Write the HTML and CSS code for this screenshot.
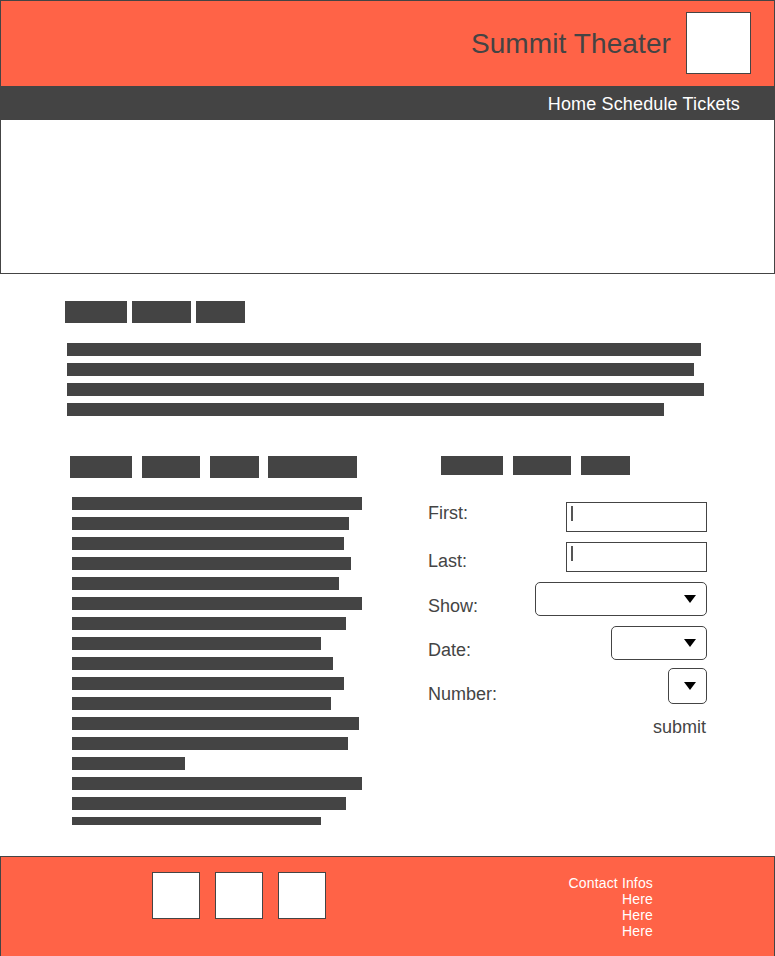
FILE: index.html
```html
<!DOCTYPE html>
<html lang="en">
<head>
<meta charset="utf-8">
<title>Summit Theater</title>
<link rel="stylesheet" href="styles.css">
</head>
<body>
<header class="site-header">
  <div class="brand-bar">
    <h1 class="brand-title">Summit Theater</h1>
    <div class="brand-logo"></div>
  </div>
  <nav class="main-nav">Home Schedule Tickets</nav>
  <div class="hero"></div>
</header>

<main class="content">
  <div class="tabs">
    <span class="tab" style="width:62px"></span>
    <span class="tab" style="width:59px"></span>
    <span class="tab" style="width:49px"></span>
  </div>
  <div class="para">
    <span class="line" style="width:634px"></span>
    <span class="line" style="width:627px"></span>
    <span class="line" style="width:637px"></span>
    <span class="line" style="width:597px"></span>
  </div>

  <div class="columns">
    <section class="col-left">
      <div class="tabs tabs-spaced">
        <span class="tab" style="width:62px"></span>
        <span class="tab" style="width:58px"></span>
        <span class="tab" style="width:49px"></span>
        <span class="tab" style="width:89px"></span>
      </div>
      <div class="text-block">
        <span class="line" style="width:290px"></span>
        <span class="line" style="width:277px"></span>
        <span class="line" style="width:272px"></span>
        <span class="line" style="width:279px"></span>
        <span class="line" style="width:267px"></span>
        <span class="line" style="width:290px"></span>
        <span class="line" style="width:274px"></span>
        <span class="line" style="width:249px"></span>
        <span class="line" style="width:261px"></span>
        <span class="line" style="width:272px"></span>
        <span class="line" style="width:259px"></span>
        <span class="line" style="width:287px"></span>
        <span class="line" style="width:276px"></span>
        <span class="line" style="width:113px"></span>
        <span class="line" style="width:290px"></span>
        <span class="line" style="width:274px"></span>
        <span class="line" style="width:249px"></span>
      </div>
    </section>

    <section class="col-right">
      <div class="tabs tabs-spaced tabs-short">
        <span class="tab" style="width:62px"></span>
        <span class="tab" style="width:58px"></span>
        <span class="tab" style="width:49px"></span>
      </div>
      <form class="ticket-form">
        <div class="row">
          <label class="label label-first">First:</label>
          <div class="input"><span class="caret"></span></div>
        </div>
        <div class="row">
          <label class="label label-last">Last:</label>
          <div class="input"><span class="caret"></span></div>
        </div>
        <div class="row">
          <label class="label">Show:</label>
          <div class="select select-show"><span class="arrow"></span></div>
        </div>
        <div class="row">
          <label class="label">Date:</label>
          <div class="select select-date"><span class="arrow"></span></div>
        </div>
        <div class="row row-tight">
          <label class="label">Number:</label>
          <div class="select select-number"><span class="arrow"></span></div>
        </div>
        <div class="submit">submit</div>
      </form>
    </section>
  </div>
</main>

<footer class="site-footer">
  <div class="social">
    <div class="social-box"></div>
    <div class="social-box"></div>
    <div class="social-box"></div>
  </div>
  <div class="contact">
    <div>Contact Infos</div>
    <div>Here</div>
    <div>Here</div>
    <div>Here</div>
  </div>
</footer>
</body>
</html>
```

FILE: styles.css
```css
* { box-sizing: border-box; }

html, body {
  margin: 0;
  padding: 0;
}

body {
  width: 775px;
  font-family: "Liberation Sans", Arial, sans-serif;
  color: #444;
  background: #fff;
}

/* Header */
.site-header {
  border: 1px solid #444;
}

.brand-bar {
  height: 85px;
  background: #ff6347;
  display: flex;
  justify-content: flex-end;
  align-items: flex-start;
  padding: 11px 23px 0 0;
}

.brand-title {
  margin: 16px 15px 0 0;
  font-size: 28px;
  font-weight: normal;
  line-height: 32px;
  letter-spacing: 0.1px;
  color: #444;
}

.brand-logo {
  width: 65px;
  height: 62px;
  background: #fff;
  border: 1px solid #444;
}

.main-nav {
  height: 34px;
  background: #444;
  color: #fff;
  font-size: 18px;
  line-height: 36px;
  letter-spacing: 0.15px;
  text-align: right;
  padding-right: 34px;
  overflow: hidden;
}

.hero {
  height: 153px;
  background: #fff;
}

/* Content */
.content {
  padding: 27px 0 31px 65px;
}

.tabs {
  display: flex;
  gap: 5px;
}

.tab {
  display: block;
  height: 22px;
  background: #444;
}

.tabs-spaced {
  gap: 10px;
}

.tabs-spaced .tab:nth-child(4) {
  margin-left: -1px;
}

.tabs-short .tab {
  height: 19px;
}

.para {
  margin: 20px 0 0 2px;
  display: flex;
  flex-direction: column;
  gap: 7px;
}

.line {
  display: block;
  height: 13px;
  background: #444;
  flex: none;
}

.columns {
  margin-top: 40px;
  display: flex;
}

.col-left {
  width: 358px;
  margin-left: 5px;
}

.text-block {
  margin: 19px 0 0 2px;
  height: 328px;
  overflow: hidden;
  display: flex;
  flex-direction: column;
  gap: 7px;
}

.col-right {
  width: 279px;
}

.col-right .tabs {
  margin-left: 13px;
}

/* Form */
.ticket-form {
  margin-top: 27px;
  display: flex;
  flex-direction: column;
  gap: 10px;
}

.row {
  display: flex;
  justify-content: space-between;
  align-items: flex-end;
}

.row-tight {
  margin-top: -2px;
}

.label {
  font-size: 18px;
  line-height: 21px;
  margin-bottom: -1px;
  color: #444;
}

.label-first {
  margin-bottom: 8px;
}

.label-last {
  margin-bottom: 0;
}

.input {
  width: 141px;
  height: 30px;
  border: 1px solid #444;
  background: #fff;
  padding: 3px 0 0 4px;
}

.caret {
  display: block;
  width: 2px;
  height: 15px;
  background: #555;
}

.select {
  height: 34px;
  border: 1px solid #444;
  border-radius: 5px;
  background: #fff;
  display: flex;
  justify-content: flex-end;
  align-items: center;
  padding-right: 10px;
}

.select-show { width: 172px; }
.select-date { width: 96px; }
.select-number { width: 39px; height: 36px; }

.arrow {
  display: block;
  width: 0;
  height: 0;
  border-left: 6px solid transparent;
  border-right: 6px solid transparent;
  border-top: 8px solid #000;
}

.submit {
  margin-top: 3px;
  font-size: 18px;
  line-height: 21px;
  text-align: right;
  padding-right: 1px;
  color: #444;
}

/* Footer */
.site-footer {
  height: 101px;
  background: #ff6347;
  border: 1px solid #444;
  display: flex;
  justify-content: space-between;
  align-items: flex-start;
  padding: 15px 121px 0 151px;
}

.social {
  display: flex;
  gap: 15px;
}

.social-box {
  width: 48px;
  height: 47px;
  background: #fff;
  border: 1px solid #444;
}

.contact {
  margin-top: 3px;
  font-size: 14px;
  line-height: 16px;
  letter-spacing: 0.15px;
  color: #fff;
  text-align: right;
}
```
